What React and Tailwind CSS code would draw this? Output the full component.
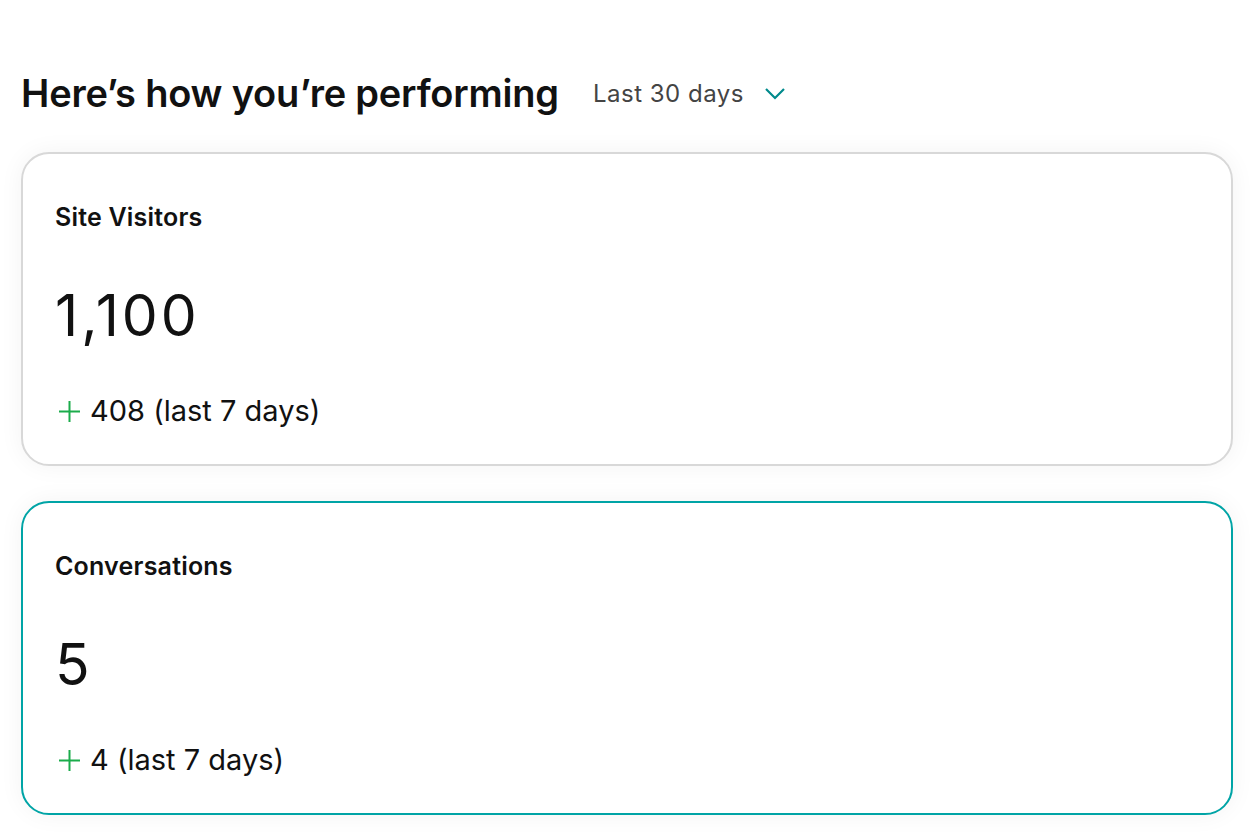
import React from "react";

function Plus() {
  return (
    <svg width="23" height="23" viewBox="0 0 23 23" className="shrink-0 ml-[3px]">
      <path d="M11.5 1v21M1 11.5h21" stroke="#1bac4b" strokeWidth="2" fill="none" />
    </svg>
  );
}

function Card({ title, value, change, accent }) {
  return (
    <div
      className={`rounded-[28px] bg-white h-[314px] pl-[32px] pt-[47px] flex flex-col shadow-[0_0_24px_rgba(0,0,0,0.05)] ${
        accent ? "border-2 border-[#00a4a6]" : "border-2 border-[#d8d8d8]"
      }`}
    >
      <div className="text-[25px] font-semibold text-[#111] leading-[32px] tracking-[0.2px]">{title}</div>
      <div className="mt-[51px] text-[57px] leading-[64px] text-[#111] font-normal tracking-[3px]">{value}</div>
      <div className="mt-[45px] flex items-center gap-[9px] text-[29px] leading-[36px] text-[#111]">
        <Plus />
        <span>{change} (last 7 days)</span>
      </div>
    </div>
  );
}

export default function App() {
  return (
    <div className="min-h-[834px] bg-white pl-[21px] pr-[25px] pt-[68px]" style={{ fontFamily: "Inter, 'Noto Sans', sans-serif" }}>
      <div className="flex items-center">
        <h1 className="text-[38px] font-semibold leading-[50px] text-[#111] tracking-[-0.2px]">Here’s how you’re performing</h1>
        <button className="ml-[34px] flex items-center gap-[20px] text-[24px] tracking-[0.5px] text-[#444] mt-[2px]">
          <span>Last 30 days</span>
          <svg width="22" height="14" viewBox="0 0 22 14">
            <path d="M2 2l9 9 9-9" stroke="#008a8c" strokeWidth="2.2" fill="none" />
          </svg>
        </button>
      </div>
      <div className="mt-[34px] flex flex-col gap-[35px]">
        <Card title="Site Visitors" value="1,100" change="408" />
        <Card title="Conversations" value="5" change="4" accent />
      </div>
    </div>
  );
}
